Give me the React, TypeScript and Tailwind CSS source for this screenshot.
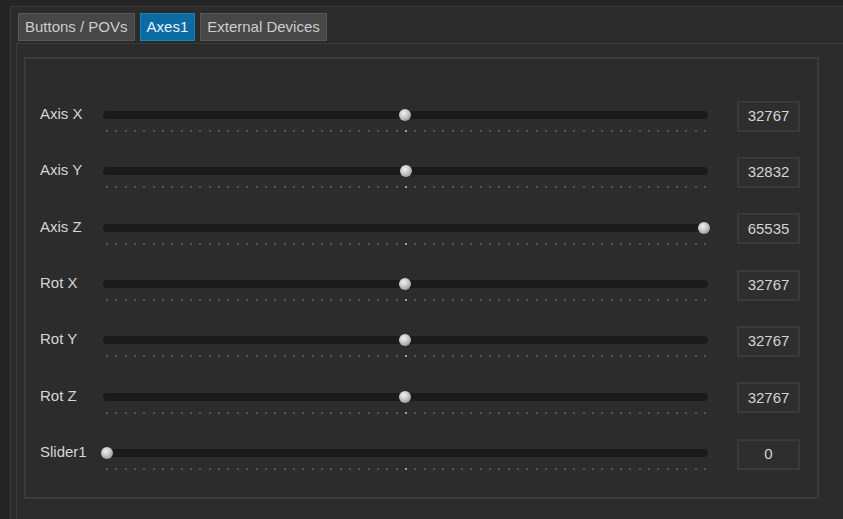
import React from 'react';

const axes = [
  { label: 'Axis X', value: 32767 },
  { label: 'Axis Y', value: 32832 },
  { label: 'Axis Z', value: 65535 },
  { label: 'Rot X', value: 32767 },
  { label: 'Rot Y', value: 32767 },
  { label: 'Rot Z', value: 32767 },
  { label: 'Slider1', value: 0 },
];

const tabs = [
  { label: 'Buttons / POVs', active: false },
  { label: 'Axes1', active: true },
  { label: 'External Devices', active: false },
];

const TICKS = Array.from({ length: 65 }, (_, i) => i);

const AxisRow: React.FC<{ label: string; value: number }> = ({ label, value }) => {
  // knob travels from 4px to 601px inside the 605px track
  const knobCenter = 4 + (value / 65535) * 597;

  return (
    <div className="h-[56.33px] flex items-center">
      <div className="w-[63px] shrink-0 mb-[2px] text-[15px] text-[#d6d6d6] whitespace-nowrap">{label}</div>

      <div className="w-[605px] shrink-0 pt-[14px] pb-[1px]">
        <div className="relative h-[8px] rounded-full bg-[#1b1b1b]">
          <div
            className="absolute top-1/2 w-[12px] h-[12px] -translate-x-1/2 -translate-y-1/2 rounded-full bg-[radial-gradient(circle_at_40%_35%,#f2f2f2_0%,#c4c4c4_45%,#7a7a7a_100%)]"
            style={{ left: knobCenter }}
          />
        </div>
        <div className="mt-[11px] ml-[3px] mr-[2px] flex justify-between">
          {TICKS.map((i) => (
            <span key={i} className={`w-[2px] h-[2px] ${i === 32 ? 'bg-[#a0a0a0]' : 'bg-[#555555]'}`} />
          ))}
        </div>
      </div>

      <div className="ml-[29px] mt-[2px] w-[63px] h-[31px] shrink-0 flex items-center justify-center border-2 border-[#3a3a3a] bg-[#2e2e2e] text-[15px] text-[#d4d4d4]">
        {value}
      </div>
    </div>
  );
};

export default function App() {
  return (
    <div
      className="w-[843px] h-[519px] overflow-hidden bg-[#252525] pt-[6px] pl-[10px]"
      style={{ fontFamily: '"Liberation Sans", Arial, sans-serif' }}
    >
      {/* outer panel */}
      <div className="w-[900px] h-[560px] border border-[#3a3a3a] bg-[#2b2b2b] pt-[6px]">
        {/* tab strip */}
        <div className="flex gap-[5px] pl-[7px]">
          {tabs.map((t) => (
            <div
              key={t.label}
              className={`h-[28px] px-[6px] flex items-center text-[15px] whitespace-nowrap border
                ${t.active
                  ? 'bg-[#0c6ba3] border-[#1d7fb8] text-[#e8f3fa]'
                  : 'bg-[#474747] border-[#575757] text-[#cdcdcd]'}
              `}
            >
              {t.label}
            </div>
          ))}
        </div>

        {/* tab content */}
        <div className="mt-[2px] ml-[5px] h-[520px] border border-[#3a3a3a] bg-[#2c2c2c] pt-[13px] pl-[7px]">
          <div className="w-[795px] h-[442px] border-2 border-[#3b3b3b] pt-[28px] pl-[14px]">
            {axes.map((a) => (
              <AxisRow key={a.label} label={a.label} value={a.value} />
            ))}
          </div>
        </div>
      </div>
    </div>
  );
}
